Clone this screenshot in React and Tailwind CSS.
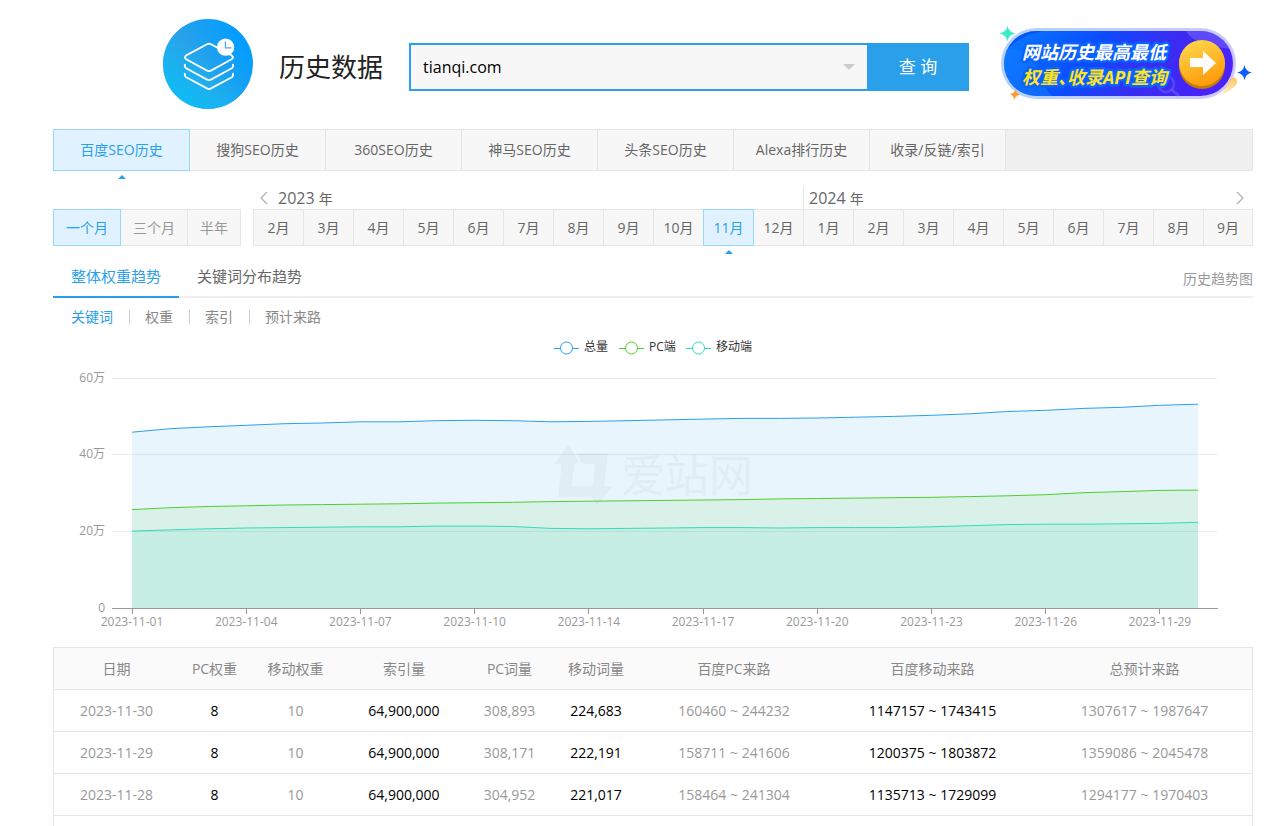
import React, { useState } from 'react';
import clsx from 'clsx';

const engineTabs = ['百度SEO历史', '搜狗SEO历史', '360SEO历史', '神马SEO历史', '头条SEO历史', 'Alexa排行历史', '收录/反链/索引'];

const ranges = ['一个月', '三个月', '半年'];

const months = [
    ...[2, 3, 4, 5, 6, 7, 8, 9, 10, 11, 12].map(m => ({ year: 2023, month: m })),
    ...[1, 2, 3, 4, 5, 6, 7, 8, 9].map(m => ({ year: 2024, month: m })),
];

const metrics = ['关键词', '权重', '索引', '预计来路'];

// Keyword counts, unit: 万
const series = [
    {
        name: '总量',
        color: '#2ba0ea',
        legendX: 501,
        data: [46, 46.9, 47.4, 47.8, 48.2, 48.4, 48.7, 48.7, 49, 49.1, 49, 48.7, 48.8, 49, 49.2, 49.4, 49.6, 49.6, 49.7, 49.9, 50.1, 50.4, 50.8, 51.4, 51.7, 52.2, 52.5, 53, 53.3],
    },
    {
        name: 'PC端',
        color: '#4fce2e',
        legendX: 566,
        data: [25.8, 26.3, 26.6, 26.8, 27, 27.1, 27.2, 27.3, 27.5, 27.6, 27.7, 27.9, 28, 28.1, 28.2, 28.3, 28.4, 28.6, 28.7, 28.8, 28.9, 29, 29.2, 29.4, 29.7, 30.2, 30.5, 30.8, 30.9],
    },
    {
        name: '移动端',
        color: '#33dbb9',
        legendX: 633,
        data: [20.2, 20.5, 20.8, 21, 21.1, 21.2, 21.3, 21.3, 21.5, 21.5, 21.4, 20.9, 20.8, 20.9, 21, 21.1, 21.1, 21, 21.1, 21.1, 21.1, 21.3, 21.6, 21.9, 22, 22, 22.1, 22.2, 22.5],
    },
];

const xLabels = ['01', '04', '07', '10', '14', '17', '20', '23', '26', '29'];

const columns = [
    { title: '日期', width: 'w-[125px]' },
    { title: 'PC权重', width: 'w-[71px]' },
    { title: '移动权重', width: 'w-[91px]' },
    { title: '索引量', width: 'w-[126px]' },
    { title: 'PC词量', width: 'w-[85px]' },
    { title: '移动词量', width: 'w-[88px]' },
    { title: '百度PC来路', width: 'w-[188px]' },
    { title: '百度移动来路', width: 'w-[209px]' },
    { title: '总预计来路', width: 'w-[215px]' },
];

const rows = [
    ['2023-11-30', '8', '10', '64,900,000', '308,893', '224,683', '160460 ~ 244232', '1147157 ~ 1743415', '1307617 ~ 1987647'],
    ['2023-11-29', '8', '10', '64,900,000', '308,171', '222,191', '158711 ~ 241606', '1200375 ~ 1803872', '1359086 ~ 2045478'],
    ['2023-11-28', '8', '10', '64,900,000', '304,952', '221,017', '158464 ~ 241304', '1135713 ~ 1729099', '1294177 ~ 1970403'],
];

// Columns printed in black
const strongColumns = [1, 3, 5, 7];

const Logo = () => (
    <svg width="90" height="90" viewBox="0 0 90 90" className="shrink-0" aria-hidden="true">
        <defs>
            <linearGradient id="logoTop" x1="0.1" y1="0.6" x2="0.85" y2="0.15">
                <stop offset="0.3" stopColor="#2ba2e8" />
                <stop offset="1" stopColor="#029dff" />
            </linearGradient>
            <linearGradient id="logoBottom" x1="0.15" y1="0.85" x2="0.5" y2="0.4">
                <stop offset="0" stopColor="#0fbcf5" />
                <stop offset="1" stopColor="#0fbcf5" stopOpacity="0" />
            </linearGradient>
        </defs>
        <circle cx="45" cy="45" r="45" fill="url(#logoTop)" />
        <circle cx="45" cy="45" r="45" fill="url(#logoBottom)" />
        <g fill="none" stroke="#fff" strokeWidth="1.8" strokeLinejoin="round" strokeLinecap="round">
            <path d="M44 25.2 Q46 24 48 25.2 L68.6 36.4 Q71.4 38.3 68.6 40.2 L48 51.6 Q46 52.8 44 51.6 L23.2 40.2 Q20.6 38.3 23.2 36.4 Z" />
            <path d="M21.8 45.6 V47 Q21.8 48.4 23.2 49.2 L44 60.6 Q46 61.8 48 60.6 L68.8 49.2 Q70 48.4 70 47 V45.6" />
            <path d="M21.8 54.6 V56 Q21.8 57.4 23.2 58.2 L44 69.4 Q46 70.6 48 69.4 L68.8 58.2 Q70 57.4 70 56 V54.6" />
        </g>
        <circle cx="62.6" cy="28.2" r="8.6" fill="#fff" />
        <path d="M62.4 22.4 V28.8 H68.4" fill="none" stroke="#45a8ee" strokeWidth="1.2" />
    </svg>
);

const ApiBanner = () => (
    <a href="#api" className="ml-[29px] shrink-0" aria-label="网站历史最高最低权重、收录API查询">
        <svg width="255" height="80" viewBox="0 0 255 80">
            <defs>
                <linearGradient id="pill" x1="0" y1="0.4" x2="1" y2="0.6">
                    <stop offset="0" stopColor="#0874ff" />
                    <stop offset="0.35" stopColor="#0b4cff" />
                    <stop offset="0.65" stopColor="#3a2cf2" />
                    <stop offset="1" stopColor="#4a22fa" />
                </linearGradient>
                <linearGradient id="pillEdge" x1="0" y1="0" x2="1" y2="0">
                    <stop offset="0" stopColor="#b4d2fd" />
                    <stop offset="1" stopColor="#cdc8fd" />
                </linearGradient>
                <linearGradient id="coin" x1="0.2" y1="0" x2="0.6" y2="1">
                    <stop offset="0" stopColor="#ffd84d" />
                    <stop offset="1" stopColor="#fd9a08" />
                </linearGradient>
                <linearGradient id="streak" x1="1" y1="0" x2="0" y2="1">
                    <stop offset="0" stopColor="#ffc24f" />
                    <stop offset="1" stopColor="#ffe9c4" stopOpacity="0.3" />
                </linearGradient>
                <clipPath id="pillClip">
                    <rect x="6" y="7" width="229" height="65" rx="32.5" />
                </clipPath>
            </defs>
            <rect x="3" y="4" width="235" height="71" rx="35.5" fill="url(#pillEdge)" />
            <path d="M215 75 Q228 69 230 57 Q237 50 239 57 Q240 64 215 75 Z" fill="url(#streak)" />
            <g clipPath="url(#pillClip)">
                <rect x="6" y="7" width="229" height="65" fill="url(#pill)" />
                <path d="M6 26 Q30 22 38 42 Q42 60 54 72 H6 Z" fill="#1278ff" opacity="0.6" />
                <path d="M6 7 H45 Q18 12 6 30 Z" fill="#0048f0" opacity="0.7" />
                <path d="M188 7 Q196 22 235 25 V7 Z" fill="#8a7dff" opacity="0.4" />
            </g>
            <circle cx="168" cy="60" r="8" fill="none" stroke="#6a70ff" strokeWidth="2.5" opacity="0.45" />
            <path d="M174 66 L180 71" stroke="#6a70ff" strokeWidth="3" opacity="0.45" strokeLinecap="round" />
            <g
                className="font-['Open_Sans','Noto_Sans_CJK_SC',sans-serif] text-[18px] font-bold italic"
                stroke="#0b62ff"
                strokeWidth="5"
                strokeLinejoin="round"
                paintOrder="stroke"
            >
                <text x="24" y="35" fill="#fff">网站历史最高最低</text>
                <text x="24" y="60" fill="#ffe51f" className="[font-feature-settings:'halt']">权重、收录API查询</text>
            </g>
            <circle cx="204" cy="42" r="23" fill="#c67b05" />
            <circle cx="204" cy="39" r="23" fill="url(#coin)" />
            <path d="M192 34 H205 V27 L218 39 L205 51 V43 H192 Z" fill="#fff" />
            <path d="M9.5 1.5 Q10.5 8.3 17.5 9.5 Q10.5 10.7 9.5 17.5 Q8.5 10.7 1.5 9.5 Q8.5 8.3 9.5 1.5 Z" fill="#37edc8" />
            <path d="M246.5 41 Q247.5 47.5 254 48.6 Q247.5 49.7 246.5 56.2 Q245.5 49.7 239 48.6 Q245.5 47.5 246.5 41 Z" fill="#0a5cff" />
            <path d="M18 65 Q18 69.5 22.5 70.5 Q17.5 71.5 16 76 Q16 71.3 11.5 70 Q16.5 69.5 18 65 Z" fill="#ff9c32" />
        </svg>
    </a>
);

/** Small blue triangle shown under the selected tab. */
const Caret = () => (
    <svg width="8" height="4" viewBox="0 0 8 4" className="absolute top-full left-1/2 mt-[5px] -translate-x-1/2" aria-hidden="true">
        <path d="M0 4 L4 0 L8 4 Z" fill="#2ba0ea" />
    </svg>
);

const Chevron = ({ d }) => (
    <svg width="9" height="14" viewBox="0 0 9 14" fill="none" stroke="#b0b0b0" strokeWidth="1.2" aria-hidden="true">
        <path d={d} />
    </svg>
);

const boxClass = (active, idle) =>
    clsx('relative border', active ? 'z-10 border-[#99d7fb] bg-[#e0f2ff] text-[#2ba0ea]' : `border-[#e5e5e5] bg-[#f7f7f7] ${idle}`);

const TrendChart = () => {
    const baseY = 270.5;
    const px = i => 79 + (i * 1066) / 28;
    const py = v => baseY - (v * 230) / 60;

    return (
        <svg viewBox="0 0 1200 309" className="block h-auto w-full text-[12px]" role="img" aria-label="关键词趋势">
            {/* Legend */}
            {series.map(s => (
                <g key={s.name} stroke={s.color}>
                    <path d={`M${s.legendX} 10.5 h25`} />
                    <circle cx={s.legendX + 12.5} cy="10" r="6" fill="#fff" />
                    <text x={s.legendX + 30} y="13" fill="#333" stroke="none">{s.name}</text>
                </g>
            ))}

            {/* Grid and y axis */}
            {[60, 40, 20, 0].map(v => (
                <g key={v}>
                    {v > 0 && <path d={`M59 ${Math.round(py(v)) - 0.5} H1164`} stroke="#ebebeb" />}
                    <text x="52" y={py(v) + 3} textAnchor="end" fill="#999">{v > 0 ? `${v}万` : '0'}</text>
                </g>
            ))}

            {/* Watermark */}
            <g fill="#000" opacity="0.03">
                <g transform="translate(467 -8) scale(0.3333)">
                    <path d="M145 345 L102 402 H125 L115 500 H215 L198 468 H155 L163 402 L178 398 Z" />
                    <path d="M170 370 H263 L252 468 L276 470 L232 524 L190 470 L220 468 L225 402 H188 Z" />
                </g>
                <text x="568" y="154" fontSize="44">爱站网</text>
            </g>

            {/* Areas, then lines */}
            {series.map(s => {
                const line = s.data.map((v, i) => `${px(i).toFixed(1)} ${py(v).toFixed(1)}`).join(' L');
                return (
                    <g key={s.name}>
                        <path d={`M${line} V${baseY} H79 Z`} fill={s.color} opacity="0.1" />
                        <path d={`M${line}`} fill="none" stroke={s.color} />
                    </g>
                );
            })}

            {/* X axis */}
            <path d={`M59 ${baseY} H1165`} stroke="#999" />
            {xLabels.map((day, i) => (
                <g key={day}>
                    <path d={`M${Math.floor(px(i * 3)) + 0.5} 271 v5`} stroke="#999" />
                    <text x={px(i * 3)} y="288" textAnchor="middle" fill="#999">{`2023-11-${day}`}</text>
                </g>
            ))}
        </svg>
    );
};

export default function App() {
    const [domain, setDomain] = useState('tianqi.com');
    const [engine, setEngine] = useState(0);
    const [range, setRange] = useState(0);
    const [monthIndex, setMonthIndex] = useState(9);
    const [view, setView] = useState(0);
    const [metric, setMetric] = useState(0);

    return (
        <div className="bg-white pr-[23px] pl-[53px] font-['Open_Sans','Noto_Sans_CJK_SC',sans-serif] text-sm text-[#666]">
            {/* Header */}
            <header className="flex items-center pt-[19px] pb-5 pl-[110px]">
                <Logo />
                <div className="flex min-w-0 flex-1 items-center pt-1.5">
                    <h1 className="mx-[26px] shrink-0 text-[26px] leading-9 text-[#222]">历史数据</h1>
                    <form className="flex h-12 min-w-0 flex-1" onSubmit={e => e.preventDefault()}>
                        <div className="flex min-w-0 flex-1 items-center border-2 border-r-0 border-[#2ba0ea] bg-[#f7f7f7]">
                            <input
                                type="text"
                                aria-label="域名"
                                value={domain}
                                onChange={e => setDomain(e.target.value)}
                                className="h-full min-w-0 flex-1 px-3 text-base text-black outline-none"
                            />
                            <button type="button" aria-label="历史记录" className="flex h-full items-center px-3">
                                <svg width="12" height="6" viewBox="0 0 12 6" aria-hidden="true">
                                    <path d="M0 0 H12 L6 6 Z" fill="#ccc" />
                                </svg>
                            </button>
                        </div>
                        <button type="submit" className="w-[102px] bg-[#2ba0ea] text-[17px] text-white">查 询</button>
                    </form>
                </div>
                <ApiBanner />
            </header>

            {/* Search engine tabs */}
            <nav className="flex h-[42px] border border-[#e5e5e5] bg-[#f0f0f0]">
                {engineTabs.map((tab, i) => (
                    <button
                        key={tab}
                        type="button"
                        onClick={() => setEngine(i)}
                        className={clsx(boxClass(engine === i, 'text-[#666]'), '-my-px -mr-px w-[137px] first:-ml-px')}
                    >
                        {tab}
                        {engine === i && <Caret />}
                    </button>
                ))}
            </nav>

            {/* Date range */}
            <div className="mt-[15px] flex items-end gap-3">
                <div className="flex h-[37px]">
                    {ranges.map((r, i) => (
                        <button
                            key={r}
                            type="button"
                            onClick={() => setRange(i)}
                            className={clsx(boxClass(range === i, 'text-[#999]'), '-mr-px px-3 last:mr-0')}
                        >
                            {r}
                        </button>
                    ))}
                </div>
                <div className="grid min-w-0 flex-1 grid-cols-20">
                    <div className="col-span-11 flex h-[23px] items-center gap-2.5 pl-1.5 text-base leading-6">
                        <button type="button" aria-label="上一年"><Chevron d="M8 1 L2 7 L8 13" /></button>
                        <span>2023 <span className="text-sm">年</span></span>
                    </div>
                    <div className="col-span-9 flex h-[23px] items-center justify-between border-l border-[#e5e5e5] pr-2 pl-[5px] text-base leading-6">
                        <span>2024 <span className="text-sm">年</span></span>
                        <button type="button" aria-label="下一年"><Chevron d="M1 1 L7 7 L1 13" /></button>
                    </div>
                    {months.map((m, i) => (
                        <button
                            key={`${m.year}-${m.month}`}
                            type="button"
                            onClick={() => setMonthIndex(i)}
                            className={clsx(boxClass(monthIndex === i, 'text-[#666]'), '-mr-px h-[37px] last:mr-0')}
                        >
                            {m.month}月
                            {monthIndex === i && <Caret />}
                        </button>
                    ))}
                </div>
            </div>

            {/* Trend tabs */}
            <div className="mt-[11px] flex h-[41px] items-center justify-between border-b-2 border-[#f0f0f0]">
                <div className="flex h-full">
                    {['整体权重趋势', '关键词分布趋势'].map((tab, i) => (
                        <button
                            key={tab}
                            type="button"
                            onClick={() => setView(i)}
                            className={clsx(
                                '-mb-0.5 border-b-2 px-[18px] text-[15px]',
                                view === i ? 'border-[#2ba0ea] text-[#2ba0ea]' : 'border-transparent'
                            )}
                        >
                            {tab}
                        </button>
                    ))}
                </div>
                <a href="#trend" className="pt-1 text-[#999]">历史趋势图</a>
            </div>

            <div className="flex h-10 items-center pb-0.5 pl-0.5 text-[#888]">
                {metrics.map((m, i) => (
                    <React.Fragment key={m}>
                        {i > 0 && <span className="-mr-px h-3.5 w-px bg-[#ccc]" />}
                        <button type="button" onClick={() => setMetric(i)} className={clsx('px-4', metric === i && 'text-[#2ba0ea]')}>
                            {m}
                        </button>
                    </React.Fragment>
                ))}
            </div>

            <TrendChart />

            {/* History table */}
            <div className="border-x border-t border-[#e5e5e5] pb-[10px]">
                <table className="w-full table-fixed border-separate border-spacing-0 text-center">
                    <thead>
                        <tr>
                            {columns.map(c => (
                                <th key={c.title} className={clsx(c.width, 'h-[42px] border-b border-[#e5e5e5] bg-[#fafafa] p-0 font-normal text-[#888]')}>
                                    {c.title}
                                </th>
                            ))}
                        </tr>
                    </thead>
                    <tbody>
                        {rows.map(row => (
                            <tr key={row[0]}>
                                {row.map((cell, i) => (
                                    <td
                                        key={columns[i].title}
                                        className={clsx('h-[42px] border-b border-[#e5e5e5] p-0', strongColumns.includes(i) ? 'text-black' : 'text-[#999]')}
                                    >
                                        {cell}
                                    </td>
                                ))}
                            </tr>
                        ))}
                    </tbody>
                </table>
            </div>
        </div>
    );
}
